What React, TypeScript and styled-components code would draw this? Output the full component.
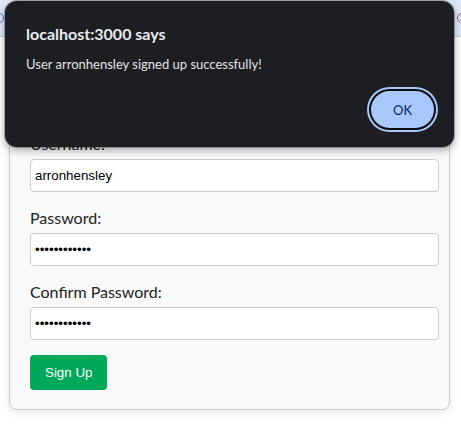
import React from "react";
import styled, { createGlobalStyle } from "styled-components";

const GlobalStyle = createGlobalStyle`
  html, body { margin: 0; padding: 0; background: #ffffff; }
  body { font-family: "Lato", "Noto Sans", sans-serif; }
`;

const Screen = styled.div`
  position: relative;
  width: 461px;
  height: 424px;
  overflow: hidden;
  background: #ffffff;
`;

const BrowserBar = styled.div`
  height: 36px;
  background: #dfe8f7;
  border-bottom: 1px solid #c9d1de;
  display: flex;
  align-items: center;
  justify-content: space-between;
`;

const EdgeIcon = styled.span<{ $side: "left" | "right" }>`
  width: 8px;
  height: 8px;
  border-radius: 50%;
  border: 1.5px solid ${(p) => (p.$side === "left" ? "#3f6fd8" : "#b0508c")};
  margin: ${(p) => (p.$side === "left" ? "0 0 0 -6px" : "0 -6px 0 0")};
`;

const Page = styled.div`
  padding: 75px 11px 0 9px;
`;

const Card = styled.form`
  background: #f9f9f9;
  border: 1px solid #cccccc;
  border-radius: 8px;
  box-shadow: 0 2px 10px rgba(0, 0, 0, 0.1);
  padding: 20px 10px 19px 20px;
`;

const Group = styled.div`
  margin-bottom: 15px;
`;

const Label = styled.label`
  display: block;
  font-family: "Lato", "Noto Sans", sans-serif;
  font-size: 16px;
  line-height: 22px;
  color: #222222;
  margin-bottom: 4px;
`;

const Input = styled.input`
  display: block;
  box-sizing: border-box;
  width: 100%;
  height: 33px;
  padding: 0 4px;
  border: 1px solid #cccccc;
  border-radius: 4px;
  background: #ffffff;
  font-family: "Liberation Sans", Arial, sans-serif;
  font-size: 13.333px;
  color: #000000;
  outline: none;
`;

const SubmitButton = styled.button`
  display: block;
  height: 35px;
  padding: 0 15px;
  border: none;
  border-radius: 4px;
  background: #00a859;
  color: #ffffff;
  font-family: "Liberation Sans", Arial, sans-serif;
  font-size: 13.333px;
`;

const Dialog = styled.div`
  position: absolute;
  left: 5px;
  top: 1px;
  width: 449px;
  height: 146px;
  box-sizing: border-box;
  background: #1c1e22;
  border-radius: 12px;
  box-shadow: 0 3px 8px rgba(0, 0, 0, 0.35), 0 0 0 1px rgba(0, 0, 0, 0.25);
  padding: 23px 20px 19px 21px;
  display: flex;
  flex-direction: column;
`;

const DialogTitle = styled.div`
  font-family: "Lato", "Noto Sans", sans-serif;
  font-weight: 700;
  font-size: 16px;
  line-height: 19px;
  color: #e8eaed;
`;

const DialogMessage = styled.div`
  margin-top: 13px;
  font-family: "Lato", "Noto Sans", sans-serif;
  font-size: 13px;
  line-height: 16px;
  color: #e3e3e3;
`;

const DialogActions = styled.div`
  margin-top: auto;
  display: flex;
  justify-content: flex-end;
`;

const OkButton = styled.button`
  width: 63px;
  height: 37px;
  border: none;
  border-radius: 999px;
  background: #a8c7fa;
  color: #0a2a5e;
  font-family: "Lato", "Noto Sans", sans-serif;
  font-size: 13px;
  box-shadow: 0 0 0 2px #0b0c0e, 0 0 0 4px #a8c7fa;
`;

export default function App() {
  return (
    <>
      <GlobalStyle />
      <Screen>
        <BrowserBar>
          <EdgeIcon $side="left" />
          <EdgeIcon $side="right" />
        </BrowserBar>
        <Page>
          <Card onSubmit={(e) => e.preventDefault()}>
            <Group>
              <Label>Username:</Label>
              <Input type="text" value="arronhensley" readOnly />
            </Group>
            <Group>
              <Label>Password:</Label>
              <Input type="password" value="arronhensley" readOnly />
            </Group>
            <Group>
              <Label>Confirm Password:</Label>
              <Input type="password" value="arronhensley" readOnly />
            </Group>
            <SubmitButton type="submit">Sign Up</SubmitButton>
          </Card>
        </Page>
        <Dialog role="alertdialog">
          <DialogTitle>localhost:3000 says</DialogTitle>
          <DialogMessage>User arronhensley signed up successfully!</DialogMessage>
          <DialogActions>
            <OkButton type="button">OK</OkButton>
          </DialogActions>
        </Dialog>
      </Screen>
    </>
  );
}
